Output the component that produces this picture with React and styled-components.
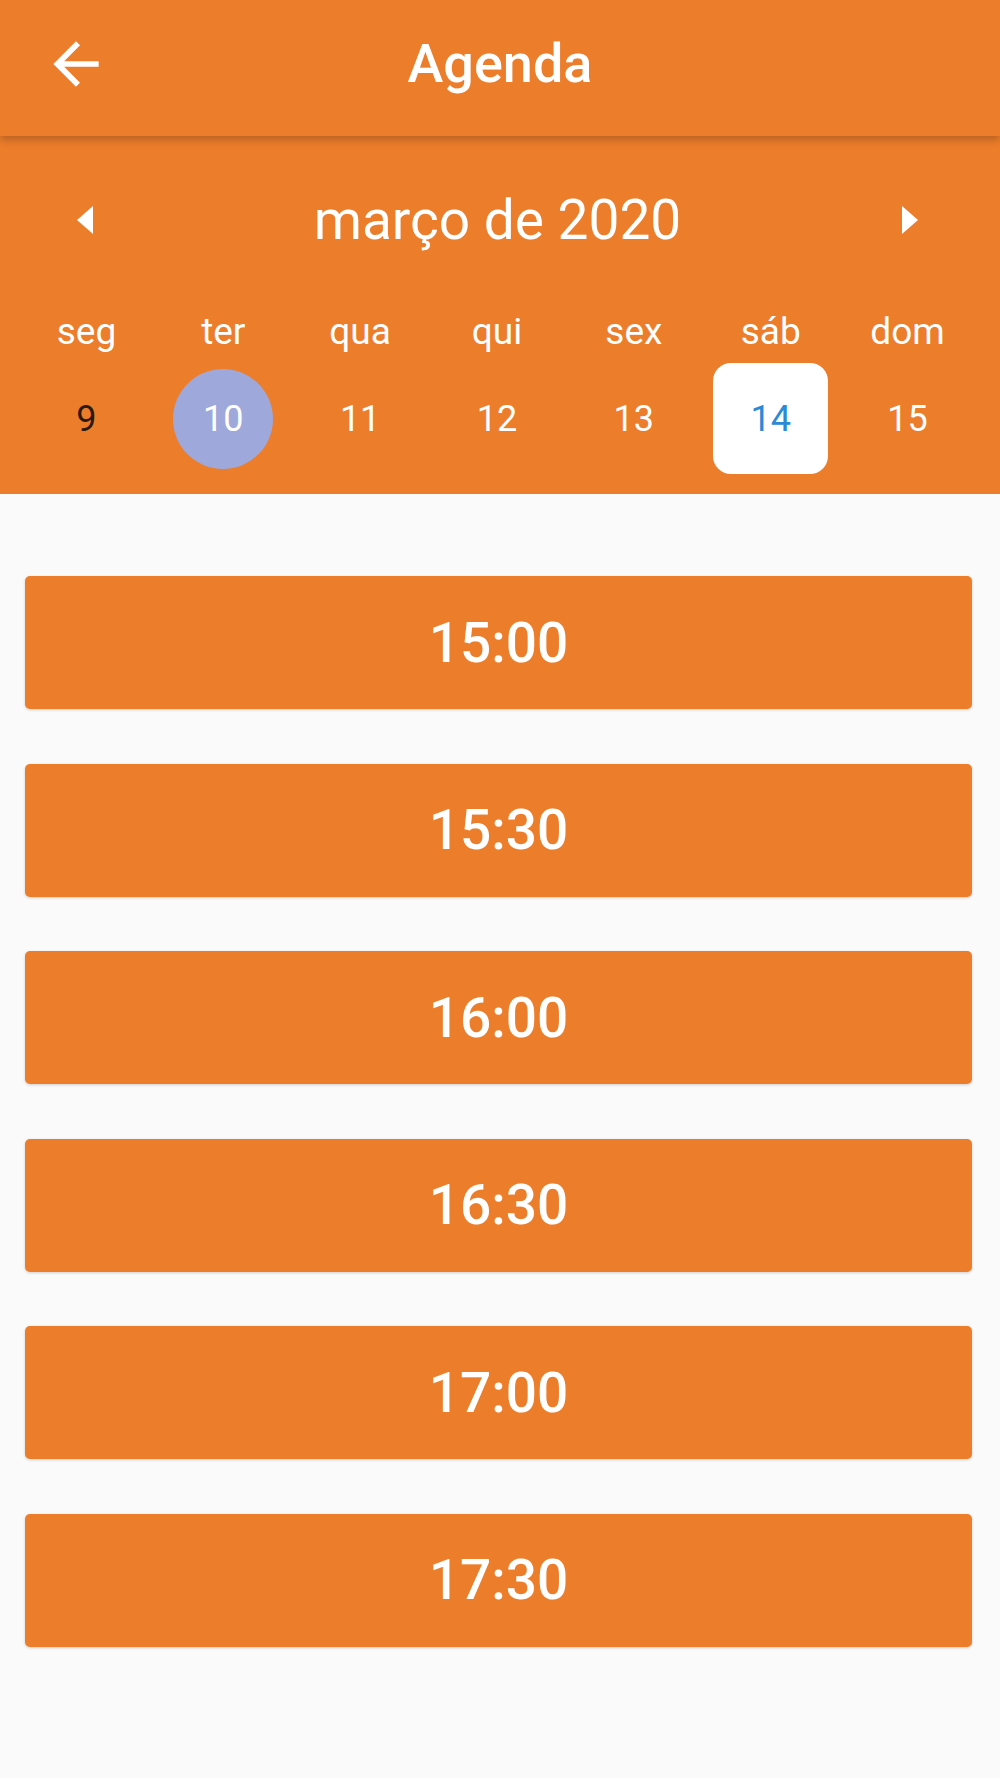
import styled, { createGlobalStyle } from "styled-components";

const ORANGE = "#ec7d2a";

const GlobalStyle = createGlobalStyle`
  body {
    margin: 0;
    background: #fafafa;
    font-family: Roboto, "Liberation Sans", sans-serif;
  }
`;

const days = [
  { label: "seg", day: 9, tone: "dark" },
  { label: "ter", day: 10, tone: "circle" },
  { label: "qua", day: 11 },
  { label: "qui", day: 12 },
  { label: "sex", day: 13 },
  { label: "sáb", day: 14, tone: "today" },
  { label: "dom", day: 15 },
];

const slots = ["15:00", "15:30", "16:00", "16:30", "17:00", "17:30"];

export default function App() {
  return (
    <Page>
      <GlobalStyle />
      <AppBar>
        <BackButton aria-label="voltar">
          <svg width="68" height="68" viewBox="0 0 24 24" fill="#fff">
            <path d="M20 11H7.83l5.59-5.59L12 4l-8 8 8 8 1.41-1.41L7.83 13H20v-2z" />
          </svg>
        </BackButton>
        <Title>Agenda</Title>
        <span />
      </AppBar>

      <Calendar>
        <MonthRow>
          <Caret aria-label="anterior">
            <svg width="16" height="28" viewBox="0 0 16 28" fill="#fff">
              <polygon points="16,0 16,28 0,14" />
            </svg>
          </Caret>
          <MonthTitle>março de 2020</MonthTitle>
          <Caret aria-label="próximo">
            <svg width="16" height="28" viewBox="0 0 16 28" fill="#fff">
              <polygon points="0,0 0,28 16,14" />
            </svg>
          </Caret>
        </MonthRow>
        <Week>
          {days.map((d) => (
            <WeekDay key={d.label}>{d.label}</WeekDay>
          ))}
        </Week>
        <Week>
          {days.map((d) => (
            <DayCell key={d.day}>
              <Day $tone={d.tone}>{d.day}</Day>
            </DayCell>
          ))}
        </Week>
      </Calendar>

      <SlotList>
        {slots.map((s) => (
          <SlotButton key={s}>{s}</SlotButton>
        ))}
      </SlotList>
    </Page>
  );
}

const Page = styled.div`
  min-height: 1778px;
  background: #fafafa;
`;

const AppBar = styled.header`
  position: relative;
  z-index: 2;
  height: 136px;
  display: grid;
  grid-template-columns: 1fr auto 1fr;
  align-items: center;
  padding: 0 0 0 42px;
  background: ${ORANGE};
  box-shadow: 0 4px 8px rgba(0, 0, 0, 0.22);
`;

const BackButton = styled.button`
  justify-self: start;
  display: flex;
  padding: 0;
  margin-top: -8px;
  border: none;
  background: none;
`;

const Title = styled.h1`
  margin: -10px 0 0 -42px;
  color: #fff;
  font-size: 54px;
  font-weight: 500;
`;

const Calendar = styled.section`
  background: ${ORANGE};
  padding: 54px 24px 20px 18px;
`;

const MonthRow = styled.div`
  height: 60px;
  display: flex;
  align-items: center;
  justify-content: space-between;
  padding: 0 58px 0 59px;
`;

const Caret = styled.button`
  display: flex;
  padding: 0;
  border: none;
  background: none;
`;

const MonthTitle = styled.h2`
  margin: 0;
  color: #fff;
  font-size: 55px;
  font-weight: 400;
`;

const Week = styled.div`
  display: grid;
  grid-template-columns: repeat(7, 1fr);
  &:nth-of-type(2) {
    margin-top: 57px;
  }
  &:nth-of-type(3) {
    margin-top: 6px;
  }
`;

const WeekDay = styled.div`
  height: 50px;
  line-height: 50px;
  text-align: center;
  color: #fff;
  font-size: 37px;
`;

const DayCell = styled.div`
  height: 111px;
  display: flex;
  align-items: center;
  justify-content: center;
`;

const Day = styled.div`
  display: flex;
  align-items: center;
  justify-content: center;
  font-size: 36px;
  color: ${(p) =>
    p.$tone === "dark" ? "#2a1a10" : p.$tone === "today" ? "#2a8ad6" : "#fff"};
  width: ${(p) => (p.$tone === "today" ? "115px" : "100px")};
  height: ${(p) => (p.$tone === "today" ? "111px" : "100px")};
  border-radius: ${(p) => (p.$tone === "today" ? "18px" : "50%")};
  background: ${(p) =>
    p.$tone === "circle" ? "#9fa8da" : p.$tone === "today" ? "#fff" : "transparent"};
`;

const SlotList = styled.main`
  display: flex;
  flex-direction: column;
  gap: 54.5px;
  padding: 82px 28px 0 25px;
`;

const SlotButton = styled.button`
  height: 133px;
  border: none;
  border-radius: 5px;
  background: ${ORANGE};
  box-shadow: 0 1px 3px rgba(0, 0, 0, 0.18);
  color: #fff;
  font-family: Roboto, "Liberation Sans", sans-serif;
  font-size: 55px;
  font-weight: 500;
`;
